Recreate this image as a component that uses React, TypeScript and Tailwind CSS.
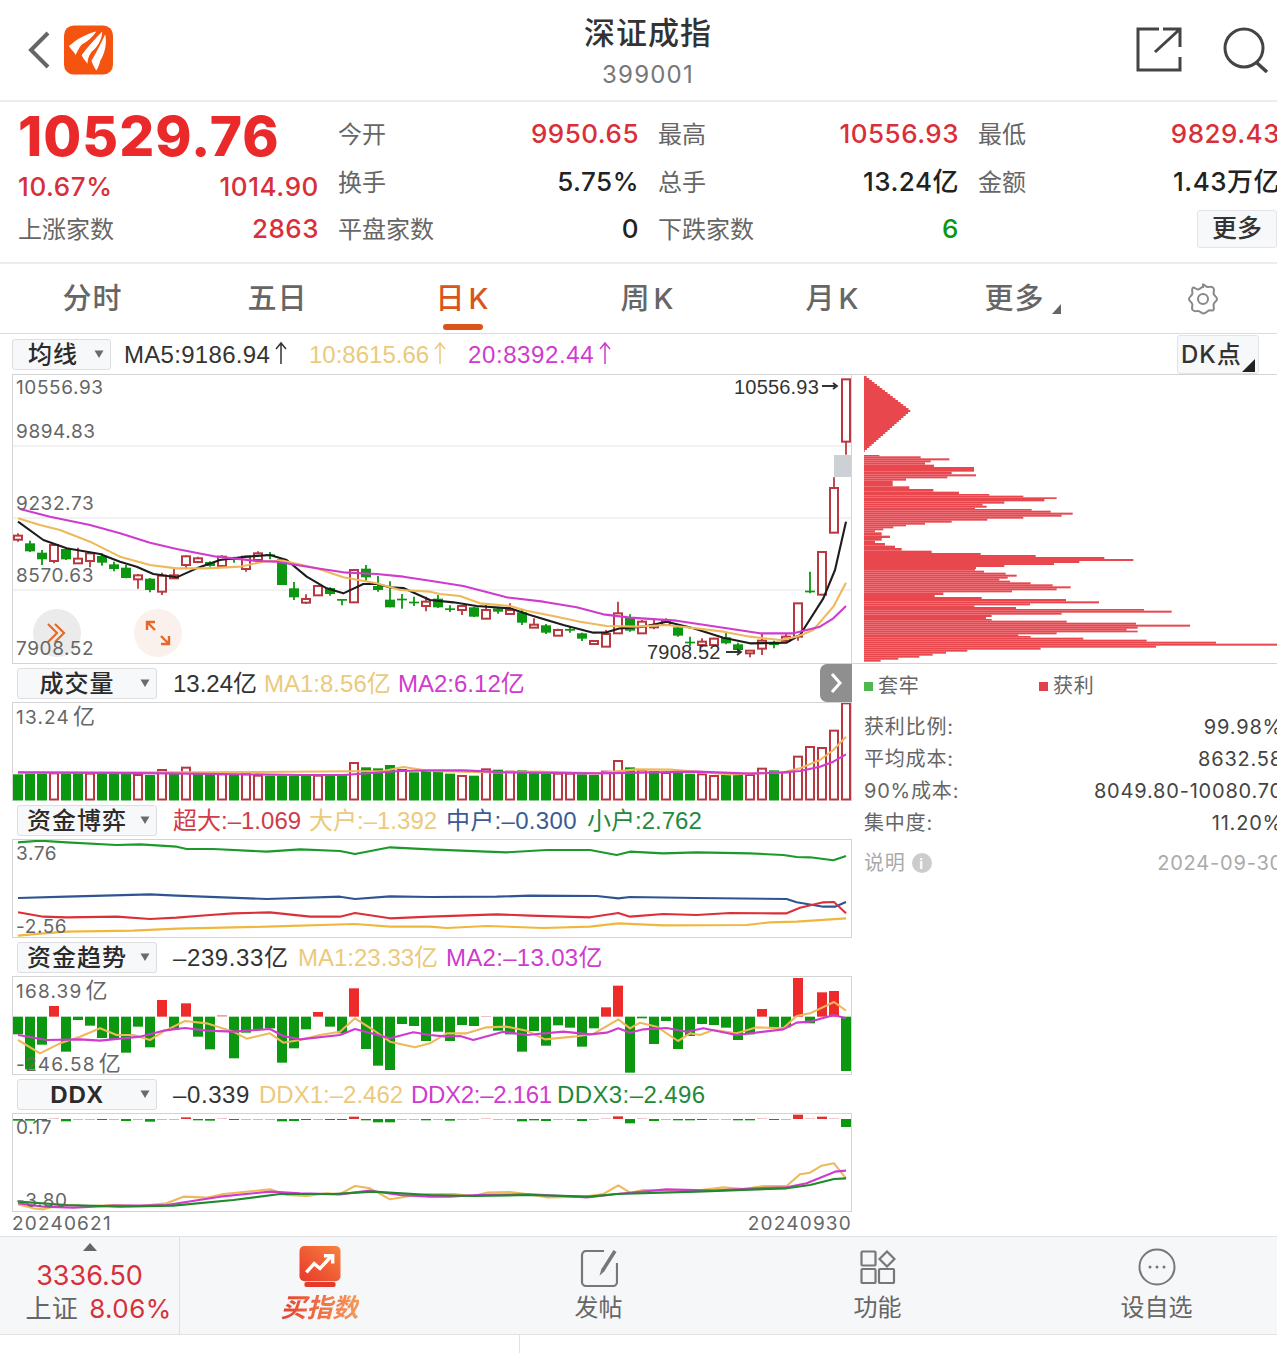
import { ReactNode } from 'react';

type P = [number, number];

const RED = '#b8383f';
const GREEN = '#0b9710';
const ORANGE = '#edb95a';
const MAGENTA = '#cf3bcf';

// x position of candle number i, in px
const cx = (i: number) => 18 + 12 * i;

// points were read off 3x crops, second half of each chart is shifted by 1290
const line = (pts: P[], shifted: P[], oy: number) =>
  [...pts, ...shifted.map(([x, y]) => [x + 1290, y] as P)].map(([x, y]) => `${x / 3},${oy + y / 3}`).join(' ');

// [bodyTop, bodyBottom, wickTop, wickBottom, up]
const CANDLES: [number, number, number, number, number][] = [
  [497, 509, 490, 515, 1], [520, 544, 512, 546, 0], [548, 568, 540, 585, 0], [525, 573, 525, 580, 1], [537, 568, 535, 570, 0],
  [566, 580, 533, 580, 1], [550, 573, 550, 592, 1], [558, 578, 550, 587, 0], [583, 597, 575, 604, 0], [593, 624, 585, 625, 0],
  [616, 628, 612, 656, 1], [626, 660, 624, 667, 0], [617, 665, 608, 675, 1], [616, 625, 597, 625, 1], [559, 585, 556, 598, 1],
  [565, 576, 560, 580, 1], [576, 588, 574, 590, 0], [560, 588, 556, 590, 1], [565, 567, 560, 578, 0], [560, 597, 558, 605, 1],
  [550, 570, 544, 572, 1], [553, 558, 546, 568, 0], [568, 645, 565, 645, 0], [655, 682, 636, 690, 0], [687, 698, 673, 702, 1],
  [648, 676, 645, 678, 1], [654, 672, 652, 677, 0], [687, 690, 687, 706, 0], [600, 697, 597, 699, 1], [596, 622, 585, 632, 0],
  [648, 660, 618, 665, 0], [689, 712, 634, 712, 0], [686, 688, 672, 716, 0], [695, 697, 680, 708, 0], [695, 708, 680, 724, 1],
  [686, 712, 675, 714, 0], [715, 717, 706, 726, 0], [708, 720, 708, 735, 1], [712, 740, 710, 741, 0], [720, 746, 705, 748, 1],
  [715, 725, 712, 731, 0], [720, 732, 700, 733, 1], [727, 758, 720, 765, 0], [764, 773, 745, 773, 1], [766, 788, 762, 792, 0],
  [780, 797, 776, 798, 1], [777, 780, 770, 788, 0], [790, 806, 788, 813, 0], [813, 822, 810, 825, 1], [792, 830, 780, 830, 1],
  [730, 790, 695, 792, 1], [742, 782, 733, 785, 0], [755, 790, 750, 792, 1], [765, 772, 745, 778, 1], [752, 765, 745, 768, 1],
  [772, 797, 762, 800, 0], [815, 818, 800, 828, 0], [815, 825, 805, 832, 1], [806, 825, 803, 830, 1], [802, 820, 785, 823, 0],
  [823, 840, 818, 845, 0], [842, 850, 840, 862, 1], [812, 836, 790, 855, 1], [820, 823, 812, 835, 0], [800, 812, 790, 815, 1],
  [700, 800, 700, 812, 1], [662, 667, 605, 670, 0], [546, 674, 546, 676, 1], [354, 488, 322, 490, 1], [28, 215, 28, 254, 1],
];

// [top, up]
const VOLUME: [number, number][] = [
  [328, 0], [326, 0], [326, 0], [325, 1], [326, 0], [326, 0], [326, 1], [326, 0], [326, 0], [326, 0],
  [330, 1], [330, 0], [315, 1], [326, 0], [308, 1], [326, 0], [326, 0], [328, 1], [328, 0], [328, 1],
  [332, 1], [332, 0], [332, 0], [332, 0], [332, 0], [332, 1], [332, 0], [330, 0], [294, 1], [307, 0],
  [310, 0], [300, 0], [315, 1], [322, 0], [318, 0], [320, 0], [326, 0], [333, 1], [332, 0], [313, 1],
  [314, 0], [320, 1], [316, 0], [322, 0], [326, 0], [326, 1], [326, 1], [328, 0], [330, 0], [320, 1],
  [288, 1], [307, 0], [316, 1], [318, 0], [324, 1], [322, 0], [326, 0], [328, 1], [333, 1], [330, 0],
  [330, 0], [330, 1], [311, 1], [316, 0], [322, 1], [275, 1], [246, 1], [249, 1], [197, 1], [115, 1],
];

// bar end relative to zero line at 230 (3x crop units)
const TREND = [
  283, 388, 314, 198, 335, 240, 257, 294, 298, 338, 260, 322, 180, 270, 190, 290, 328, 225, 355, 278, 268, 265, 368, 325, 268,
  216, 260, 280, 145, 327, 377, 390, 252, 258, 303, 275, 303, 255, 258, 228, 272, 283, 335, 273, 317, 256, 263, 320, 265, 202,
  137, 398, 235, 312, 243, 327, 288, 252, 255, 263, 300, 283, 207, 262, 262, 114, 250, 157, 153, 393,
];

// height, negative goes up (red)
const DDX_BARS = [
  5, 5, 3, -1, 7, 2, 1, 3, 2, 6, 1, 8, 0, 2, -5, 4, 5, -1, 3, 1, 1, 1, 7, 6, 3, 0, 3, 3, -7, 4, 10, 10, 1, 2, 4, 2, 5, 2, 2, -1, 2, 2, 7, 4, 6,
  2, 2, 6, 2, -1, -8, 13, -1, 6, 0, 4, 4, 3, 1, 1, 4, 4, -1, 3, 2, -13, -1, -7, -1, 24,
];

// chip distribution outline [y, right edge] in 3x crop units
const CHIPS: P[] = [
  [258, 58], [262, 182], [268, 268], [274, 212], [280, 195], [287, 222], [294, 342], [300, 342], [308, 275], [316, 348], [322, 262], [328, 138],
  [335, 98], [345, 98], [352, 148], [360, 220], [368, 297], [375, 388], [380, 490], [385, 590], [390, 553], [397, 433], [404, 368], [410, 380],
  [416, 345], [420, 515], [425, 572], [431, 638], [437, 605], [443, 490], [449, 382], [455, 275], [461, 195], [467, 138], [472, 100], [478, 70],
  [484, 45], [490, 65], [500, 90], [507, 65], [515, 45], [522, 75], [530, 105], [537, 125], [545, 215], [552, 362], [558, 527], [564, 733],
  [570, 820], [576, 658], [582, 582], [588, 433], [594, 348], [600, 345], [605, 372], [611, 437], [617, 470], [623, 443], [629, 418], [635, 450],
  [640, 512], [646, 578], [652, 632], [658, 590], [664, 456], [670, 250], [678, 224], [684, 365], [690, 618], [697, 717], [703, 510], [709, 343],
  [714, 468], [720, 852], [725, 935], [731, 605], [737, 395], [744, 378], [750, 395], [755, 620], [761, 828], [767, 990], [773, 833], [779, 800],
  [785, 833], [790, 590], [796, 475], [801, 512], [806, 670], [812, 860], [818, 1068], [824, 1260], [830, 888], [836, 542], [842, 322], [848, 258],
  [854, 218], [860, 178], [866, 115], [872, 62],
];

const Poly = ({ points, color, width = 2.1 }: { points: string; color: string; width?: number }) => (
  <polyline points={points} fill="none" stroke={color} strokeWidth={width} strokeLinejoin="round" />
);

const Caret = () => (
  <svg width="12" height="10" viewBox="0 0 12 10" className="shrink-0">
    <path d="M1.5 1.5h9L6 9z" fill="#6b6b6b" />
  </svg>
);

const UpArrow = ({ color }: { color: string }) => (
  <svg width="14" height="24" viewBox="0 0 14 24" className="mt-[4px] ml-[4px] shrink-0">
    <path d="M7 23V2M2 8l5-6 5 6" fill="none" stroke={color} strokeWidth="1.500" />
  </svg>
);

const Selector = ({ label, small }: { label: ReactNode; small?: boolean }) => (
  <div
    className={`flex h-[31px] items-center rounded-[3px] border border-[#dcdee2] bg-[#f7f8fa] pr-[5px] text-[24px] font-medium tracking-[1px] text-[#2b2b2b] ${small ? 'w-[99px]' : 'w-[140px]'}`}
  >
    <span className={`flex-1 pt-[2px] text-center ${small ? '' : 'pr-[3px]'}`}>{label}</span>
    <Caret />
  </div>
);

const Legend = ({ label, children }: { label: ReactNode; children: ReactNode }) => (
  <div className="flex h-[38px] items-center pl-[5px] font-[family-name:'Liberation_Sans','Noto_Sans_CJK_SC',sans-serif]">
    <Selector label={label} />
    <div className="ml-[16px] flex pt-[2px] text-[24px] whitespace-nowrap">{children}</div>
  </div>
);

const AxisLabel = ({ top, children }: { top: string; children: ReactNode }) => (
  <span className={`absolute left-[3px] text-[19px] leading-[20px] tracking-[0.6px] text-[#666] ${top}`}>{children}</span>
);

const YiLabel = ({ value }: { value: string }) => (
  <>
    <span className="tracking-[1.2px]">{value}</span>
    <span className="ml-[3px] text-[22px]">亿</span>
  </>
);

const Stat = ({ label, value, color }: { label: string; value: string; color: string }) => (
  <div className="flex items-center justify-between">
    <span className="text-[24px] text-[#666]">{label}</span>
    <span className={`pb-[3px] text-[26px] font-medium tracking-[0.5px] whitespace-nowrap ${color}`}>{value}</span>
  </div>
);

const KChart = () => (
  <svg width={838} height={288} viewBox="13 375 838 288" className="block">
    {[446, 518, 590].map((y) => (
      <line key={y} x1={13} x2={851} y1={y} y2={y} stroke="#e4e4e4" />
    ))}
    <rect x={834} y={455} width={17} height={22} fill="#cdd0d4" />
    {CANDLES.map(([t, b, wt, wb, up], i) => {
      const x = cx(i);
      const y = (v: number) => 370 + v / 3;
      return (
        <g key={i}>
          <line x1={x} x2={x} y1={y(wt)} y2={y(wb)} stroke={up ? RED : GREEN} strokeWidth={1.8} />
          {up ? (
            <rect x={x - 4} y={y(t)} width={8} height={(b - t) / 3} fill="#fff" stroke={RED} strokeWidth={2} />
          ) : (
            <rect x={x - 5} y={y(t)} width={10} height={Math.max((b - t) / 3, 1.7)} fill={GREEN} />
          )}
        </g>
      );
    })}
    <Poly
      color="#1d1d1d"
      points={line(
        [[54, 455], [130, 510], [200, 535], [300, 552], [360, 575], [410, 590], [460, 612], [530, 622], [590, 595], [660, 570], [740, 560], [810, 555], [860, 570], [920, 620], [980, 655], [1030, 670], [1090, 642], [1130, 642], [1170, 652], [1210, 654], [1290, 690]],
        [[70, 697], [140, 708], [240, 715], [300, 735], [400, 765], [490, 788], [530, 787], [570, 775], [640, 770], [710, 755], [790, 775], [880, 803], [960, 820], [1070, 818], [1110, 795], [1180, 685], [1215, 600], [1248, 455]],
        370,
      )}
    />
    <Poly
      color={ORANGE}
      points={line(
        [[54, 445], [120, 465], [180, 480], [270, 515], [360, 560], [450, 585], [530, 595], [620, 595], [720, 590], [790, 575], [850, 572], [950, 595], [1030, 622], [1130, 640], [1200, 660], [1290, 665]],
        [[30, 672], [90, 678], [150, 700], [240, 708], [290, 722], [380, 740], [450, 755], [530, 768], [620, 770], [710, 765], [800, 775], [880, 785], [960, 800], [1050, 810], [1100, 800], [1150, 780], [1210, 710], [1248, 638]],
        370,
      )}
    />
    <Poly
      color={MAGENTA}
      points={line(
        [[60, 417], [150, 440], [270, 465], [360, 490], [450, 518], [530, 537], [650, 560], [700, 565], [770, 573], [830, 575], [950, 595], [1030, 607], [1130, 612], [1210, 620], [1290, 632]],
        [[100, 648], [230, 682], [340, 695], [440, 712], [520, 733], [600, 743], [740, 752], [860, 770], [990, 790], [1090, 790], [1170, 770], [1210, 745], [1248, 708]],
        370,
      )}
    />
    <path d="M822 386h15M833 383l4 3-4 3" fill="none" stroke="#333" strokeWidth={1.8} />
    <path d="M726 652h15M737 649l4 3-4 3" fill="none" stroke="#333" strokeWidth={1.8} />
  </svg>
);

const VolumeChart = () => (
  <svg width={838} height={98} viewBox="13 703 838 98" className="block">
    {VOLUME.map(([t, up], i) => {
      const x = cx(i);
      const y = 665 + t / 3;
      return up ? (
        <rect key={i} x={x - 4} y={y} width={8} height={799.5 - y} fill="#fff" stroke={RED} strokeWidth={2} />
      ) : (
        <rect key={i} x={x - 5} y={y} width={10} height={800.5 - y} fill={GREEN} />
      );
    })}
    <Poly
      color={ORANGE}
      points={line(
        [[54, 322], [500, 322], [620, 322], [1150, 318], [1210, 306], [1290, 318]],
        [[200, 322], [320, 320], [500, 325], [620, 313], [720, 314], [900, 328], [1060, 322], [1110, 310], [1170, 285], [1210, 255], [1248, 215]],
        665,
      )}
    />
    <Poly
      color={MAGENTA}
      points={line(
        [[54, 322], [500, 325], [900, 330], [1030, 330], [1200, 318], [1290, 316]],
        [[100, 316], [230, 322], [500, 325], [800, 320], [960, 326], [1060, 322], [1110, 318], [1170, 305], [1210, 290], [1248, 268]],
        665,
      )}
    />
  </svg>
);

const FundChart = () => (
  <svg width={838} height={97} viewBox="13 840 838 97" className="block">
    <Poly
      color="#1a9a2b"
      points={line(
        [[54, 532], [120, 527], [200, 532], [350, 540], [420, 538], [530, 545], [560, 552], [640, 552], [800, 560], [900, 553], [1020, 558], [1065, 567], [1170, 547], [1290, 553]],
        [[170, 560], [230, 562], [350, 555], [480, 555], [560, 570], [600, 560], [700, 565], [800, 562], [960, 565], [1060, 570], [1100, 576], [1140, 577], [1210, 586], [1248, 573]],
        665,
      )}
    />
    <Poly
      color="#2f5590"
      points={line(
        [[54, 699], [200, 695], [450, 688], [530, 692], [800, 702], [1020, 695], [1065, 702], [1170, 694], [1290, 696]],
        [[200, 695], [300, 692], [500, 693], [565, 700], [600, 696], [800, 699], [1070, 702], [1100, 712], [1180, 725], [1215, 725], [1248, 711]],
        665,
      )}
    />
    <Poly
      color="#dc3038"
      points={line(
        [[54, 742], [130, 755], [200, 757], [350, 755], [450, 762], [530, 758], [630, 750], [700, 745], [810, 742], [930, 755], [1020, 755], [1065, 744], [1170, 760], [1290, 755]],
        [[200, 748], [300, 752], [480, 757], [565, 744], [600, 755], [700, 747], [800, 750], [900, 744], [1030, 745], [1070, 745], [1110, 728], [1180, 712], [1212, 711], [1248, 745]],
        665,
      )}
    />
    <Poly
      color="#f0b73e"
      points={line(
        [[54, 812], [130, 805], [200, 800], [400, 797], [530, 791], [800, 785], [1065, 777], [1170, 785], [1290, 785]],
        [[50, 789], [170, 783], [340, 789], [480, 785], [565, 775], [700, 781], [950, 780], [1020, 772], [1100, 770], [1248, 760]],
        665,
      )}
    />
  </svg>
);

const TrendChart = () => (
  <svg width={838} height={97} viewBox="13 977 838 97" className="block">
    {TREND.map((v, i) => {
      const zero = 940 + 230 / 3;
      const end = 940 + v / 3;
      const up = v < 230;
      return (
        <rect
          key={i}
          x={cx(i) - 5}
          y={up ? end : zero}
          width={10}
          height={Math.abs(end - zero)}
          fill={up ? (v > 224 ? '#f0a0a0' : '#ee2a2a') : GREEN}
        />
      );
    })}
    <Poly
      color={ORANGE}
      points={line(
        [[54, 300], [120, 340], [180, 310], [240, 290], [300, 265], [350, 285], [400, 285], [450, 300], [490, 275], [555, 243], [620, 250], [700, 275], [740, 296], [810, 280], [850, 308], [900, 300], [960, 285], [1020, 275], [1065, 235], [1120, 270], [1170, 305], [1245, 322], [1290, 310]],
        [[50, 280], [110, 280], [170, 262], [230, 260], [290, 272], [345, 298], [430, 290], [490, 282], [565, 238], [600, 265], [630, 248], [680, 260], [744, 303], [780, 280], [810, 285], [850, 270], [920, 280], [980, 262], [1060, 265], [1100, 228], [1140, 220], [1212, 186], [1248, 212]],
        940,
      )}
    />
    <Poly
      color={MAGENTA}
      points={line(
        [[54, 285], [140, 300], [240, 298], [300, 302], [420, 290], [490, 272], [555, 264], [620, 272], [700, 275], [810, 267], [850, 288], [900, 298], [1020, 285], [1065, 267], [1170, 295], [1240, 277], [1290, 285]],
        [[50, 290], [90, 288], [130, 300], [220, 275], [290, 285], [400, 275], [480, 283], [530, 278], [565, 265], [600, 278], [640, 268], [710, 264], [770, 275], [820, 265], [920, 285], [1060, 268], [1100, 248], [1140, 245], [1212, 225], [1248, 235]],
        940,
      )}
    />
  </svg>
);

const DdxChart = () => (
  <svg width={838} height={97} viewBox="13 1114 838 97" className="block">
    {DDX_BARS.map((h, i) => {
      const base = 940 + 537 / 3;
      const hh = Math.max(Math.abs(h) / 3, 0.7);
      return (
        <rect
          key={i}
          x={cx(i) - 5}
          y={h < 0 ? base - hh : base}
          width={10}
          height={hh}
          fill={h < 0 ? (h < -3 ? '#e23030' : '#f0b0b0') : h < 3 ? '#7fbf82' : GREEN}
        />
      );
    })}
    <Poly
      color={ORANGE}
      points={line(
        [[54, 793], [100, 805], [130, 808], [180, 795], [270, 798], [340, 795], [420, 798], [500, 790], [550, 770], [620, 773], [670, 762], [810, 748], [860, 765], [920, 768], [980, 760], [1020, 762], [1065, 738], [1110, 745], [1170, 778], [1230, 768], [1290, 762]],
        [[70, 762], [130, 768], [170, 758], [240, 756], [290, 762], [350, 772], [460, 770], [520, 762], [565, 736], [600, 758], [640, 750], [700, 752], [800, 752], [880, 742], [940, 747], [1000, 738], [1070, 738], [1110, 703], [1140, 698], [1175, 677], [1212, 670], [1248, 715]],
        940,
      )}
    />
    <Poly
      color={MAGENTA}
      points={line(
        [[54, 790], [130, 800], [220, 803], [340, 797], [420, 797], [500, 795], [660, 770], [810, 755], [900, 760], [1020, 763], [1110, 752], [1200, 765], [1290, 770]],
        [[60, 770], [140, 765], [300, 763], [400, 768], [470, 772], [560, 762], [710, 748], [850, 752], [980, 745], [1070, 742], [1130, 730], [1215, 695], [1248, 692]],
        940,
      )}
    />
    <Poly
      color="#1f8a2a"
      points={line(
        [[54, 785], [200, 795], [360, 800], [520, 797], [700, 780], [840, 762], [1000, 762], [1120, 755], [1290, 765]],
        [[130, 768], [300, 765], [480, 770], [560, 762], [800, 755], [1070, 745], [1140, 735], [1212, 717], [1248, 715]],
        940,
      )}
    />
  </svg>
);

const ChipChart = () => {
  const top: P[] = [];
  for (let y = 15; y < 248; y += 6) top.push([y, y < 122 ? 12 + ((y - 15) / 107) * 140 : 152 - ((y - 122) / 123) * 140]);
  const draw = (rows: P[]) =>
    rows.map(([y, r], i) => {
      const next = i < rows.length - 1 ? rows[i + 1][0] : y + 6;
      return <rect key={y} x={864} y={370 + y / 3 - 1} width={(r - 12) / 3} height={(next - y) / 3} fill="#e8474e" />;
    });
  return (
    <svg width={425} height={288} viewBox="852 375 425 288" className="block">
      {draw(top)}
      {draw(CHIPS)}
    </svg>
  );
};

const Row = ({ label, value }: { label: string; value: string }) => (
  <div className="flex h-[32px] items-center justify-between">
    <span className="text-[#666]">{label}</span>
    <span className="text-[#444]">{value}</span>
  </div>
);

const NavItem = ({ icon, label }: { icon: ReactNode; label: ReactNode }) => (
  <div className="flex w-[279px] flex-col items-center">
    <div className="flex h-[50px] items-end">{icon}</div>
    <div className="mt-[5px] text-[24px] leading-[32px] text-[#666]">{label}</div>
  </div>
);

export default function App() {
  return (
    <div className="relative h-[1353px] w-[1277px] overflow-hidden bg-white font-[family-name:Inter,'Noto_Sans_CJK_SC',sans-serif]">
      {/* Header */}
      <div className="flex h-[102px] items-center justify-between border-b-2 border-[#ececec]">
        <div className="flex items-center pl-[27px]">
          <svg width="24" height="40" viewBox="0 0 24 40">
            <path d="M21 3L4 20l17 17" fill="none" stroke="#666" strokeWidth="4" />
          </svg>
          <svg width="49" height="50" viewBox="0 0 50 50" className="ml-[13px]">
            <rect width="50" height="50" rx="10" fill="#f55310" />
            <path d="M5 21C14 13 24 8 33 6 29 12 24 16 19 19 16 21 14 26 12 30 10 27 7 24 5 21Z" fill="#fff" />
            <path d="M18 30C24 22 32 13 39 6 39 14 34 22 28 27 25 31 24 35 24 39 22 36 19 33 18 30Z" fill="#fff" />
            <path d="M28 36C33 28 38 18 42 9 44 18 42 28 37 36 36 40 35 43 33 46 31 43 29 39 28 36Z" fill="#fff" />
          </svg>
        </div>
        <div className="absolute top-[10px] left-[448px] flex w-[400px] flex-col items-center">
          <div className="text-[31px] leading-[46px] font-medium tracking-[1px] text-[#333]">深证成指</div>
          <div className="mt-[4px] text-[24px] leading-[30px] tracking-[1.2px] text-[#777]">399001</div>
        </div>
        <div className="flex items-center gap-[41px] pr-[8px]">
          <svg width="46" height="46" viewBox="0 0 46 46">
            <path d="M23 2H2v41h42V30" fill="none" stroke="#444" strokeWidth="3" />
            <path d="M27 2h17v18M44 2L19 25" fill="none" stroke="#444" strokeWidth="3" />
          </svg>
          <svg width="46" height="46" viewBox="0 0 46 46">
            <circle cx="21" cy="21" r="19" fill="none" stroke="#444" strokeWidth="3" />
            <path d="M34 36l10 9" fill="none" stroke="#444" strokeWidth="3.5" />
          </svg>
        </div>
      </div>

      {/* Quote */}
      <div className="grid h-[162px] grid-cols-[301px_301px_301px_302px] grid-rows-[50px_46px_48px] gap-x-[19px] border-b-2 border-[#ececec] pt-[8px] pl-[18px]">
        <div className="text-[55px] leading-[52px] font-extrabold tracking-[1px] text-[#ea2a2a]">10529.76</div>
        <Stat label="今开" value="9950.65" color="text-[#d8303a]" />
        <Stat label="最高" value="10556.93" color="text-[#d8303a]" />
        <Stat label="最低" value="9829.43" color="text-[#d8303a]" />
        <div className="flex items-center justify-between pt-[6px] text-[26px] font-medium tracking-[0.6px] text-[#d8303a]">
          <span>10.67%</span>
          <span>1014.90</span>
        </div>
        <Stat label="换手" value="5.75%" color="text-[#222]" />
        <Stat label="总手" value="13.24亿" color="text-[#222]" />
        <Stat label="金额" value="1.43万亿" color="text-[#222]" />
        <Stat label="上涨家数" value="2863" color="text-[#d8303a]" />
        <Stat label="平盘家数" value="0" color="text-[#222]" />
        <Stat label="下跌家数" value="6" color="text-[#0b9710]" />
        <div className="flex items-start justify-end pt-[4px] pr-[3px]">
          <div className="flex h-[38px] w-[80px] items-center justify-center rounded-[3px] border border-[#e2e4e8] bg-[#f7f8fa] text-[25px] font-medium text-[#333]">
            更多
          </div>
        </div>
      </div>

      {/* Period tabs */}
      <div className="grid h-[70px] w-[1295px] grid-cols-7 items-center border-b border-[#dcdcdc] text-[29px] font-medium tracking-[1px] text-[#666]">
        <div className="text-center">分时</div>
        <div className="text-center">五日</div>
        <div className="relative flex justify-center text-[#d9551a]">
          日<span className="ml-[3px]">K</span>
          <span className="absolute -bottom-[10px] h-[6px] w-[40px] rounded-full bg-[#d9551a]" />
        </div>
        <div className="flex justify-center">
          周<span className="ml-[3px]">K</span>
        </div>
        <div className="flex justify-center">
          月<span className="ml-[3px]">K</span>
        </div>
        <div className="relative flex justify-center pr-[6px]">
          更多
          <svg width="9" height="10" viewBox="0 0 9 10" className="absolute top-[27px] left-[127px]">
            <path d="M9 0v10H0z" fill="#666" />
          </svg>
        </div>
        <div className="flex justify-center">
          <svg width="32" height="32" viewBox="0 0 32 32">
            <path
              d="M16 1.500c2 0 2.500 2.500 5 2.500s4-1 5.500 1.200-.6 3.800.3 6 3.200 2.600 3.200 4.800-2.300 2.600-3.200 4.800.9 3.800-.3 6-3-1-5.500 1.200S18 30.500 16 30.500s-2.500-2.500-5-2.500-4 1-5.500-1.200.6-3.800-.3-6-3.200-2.600-3.200-4.800 2.300-2.600 3.200-4.800-.9-3.800.3-6 3 1.200 5.500 1.200 3-2.500 5-2.500z"
              fill="none"
              stroke="#888"
              strokeWidth="2"
            />
            <circle cx="16" cy="16" r="5" fill="none" stroke="#888" strokeWidth="2" />
          </svg>
        </div>
      </div>

      {/* Charts + chip panel */}
      <div className="flex">
        <div className="w-[852px] shrink-0 pl-[12px]">
          <div className="flex h-[40px] items-center font-[family-name:'Liberation_Sans','Noto_Sans_CJK_SC',sans-serif]">
            <Selector label="均线" small />
            <div className="ml-[13px] flex pt-[2px] text-[24px] whitespace-nowrap">
              <span className="flex w-[185px] tracking-[0.3px] text-[#333]">
                MA5:9186.94
                <UpArrow color="#333" />
              </span>
              <span className="flex w-[159px] text-[#ecc97c]">
                10:8615.66
                <UpArrow color="#ecc97c" />
              </span>
              <span className="flex tracking-[0.6px] text-[#cf3bcf]">
                20:8392.44
                <UpArrow color="#cf3bcf" />
              </span>
            </div>
          </div>
          <div className="relative h-[290px] border border-[#d4d4d4]">
            <KChart />
            <AxisLabel top="top-[3px]">10556.93</AxisLabel>
            <AxisLabel top="top-[47px]">9894.83</AxisLabel>
            <AxisLabel top="top-[119px]">9232.73</AxisLabel>
            <AxisLabel top="top-[191px]">8570.63</AxisLabel>
            <span className="absolute top-[2px] left-[721px] font-[family-name:'Liberation_Sans',sans-serif] text-[20px] leading-[20px] tracking-[0.2px] text-[#333]">
              10556.93
            </span>
            <span className="absolute top-[267px] left-[634px] font-[family-name:'Liberation_Sans',sans-serif] text-[20px] leading-[20px] tracking-[0.2px] text-[#333]">
              7908.52
            </span>
            <div className="absolute top-[234px] left-[20px] flex h-12 w-12 items-center justify-center rounded-full bg-[#ebebeb]">
              <svg width="20" height="20" viewBox="0 0 20 20">
                <path d="M1 1l9 9-9 9M8 1l9 9-9 9" fill="none" stroke="#e5692c" strokeWidth="2.200" />
              </svg>
            </div>
            <div className="absolute top-[234px] left-[121px] flex h-12 w-12 items-center justify-center rounded-full bg-[#fbf1ec]">
              <svg width="26" height="26" viewBox="0 0 26 26">
                <path d="M2 2l8 8M2 10V2h8M24 24l-8-8M24 16v8h-8" fill="none" stroke="#e5692c" strokeWidth="2.400" />
              </svg>
            </div>
            <AxisLabel top="top-[264px]">7908.52</AxisLabel>
          </div>

          <Legend label="成交量">
            <span className="w-[91px] text-[#333]">13.24亿</span>
            <span className="w-[134px] text-[#ecc97c]">MA1:8.56亿</span>
            <span className="text-[#cf3bcf]">MA2:6.12亿</span>
          </Legend>
          <div className="relative h-[99px] border-x border-t border-[#d4d4d4]">
            <VolumeChart />
            <AxisLabel top="top-[3px]">
              <YiLabel value="13.24" />
            </AxisLabel>
          </div>

          <Legend label="资金博弈">
            <span className="w-[136px] text-[#d23b47]">超大:–1.069</span>
            <span className="w-[137px] text-[#ecc97c]">大户:–1.392</span>
            <span className="w-[141px] tracking-[0.3px] text-[#3c5a92]">中户:–0.300</span>
            <span className="text-[#1f8a3a]">小户:2.762</span>
          </Legend>
          <div className="relative h-[99px] border border-[#d4d4d4]">
            <FundChart />
            <AxisLabel top="top-[4px]">3.76</AxisLabel>
            <AxisLabel top="top-[77px]">-2.56</AxisLabel>
          </div>

          <Legend label="资金趋势">
            <span className="w-[125px] tracking-[0.6px] text-[#333]">–239.33亿</span>
            <span className="w-[148px] text-[#ecc97c]">MA1:23.33亿</span>
            <span className="tracking-[0.3px] text-[#cf3bcf]">MA2:–13.03亿</span>
          </Legend>
          <div className="relative h-[99px] border border-[#d4d4d4]">
            <TrendChart />
            <AxisLabel top="top-[3px]">
              <YiLabel value="168.39" />
            </AxisLabel>
            <AxisLabel top="top-[76px]">
              <YiLabel value="-246.58" />
            </AxisLabel>
          </div>

          <Legend label={<span className="font-bold">DDX</span>}>
            <span className="w-[86px] tracking-[0.6px] text-[#333]">–0.339</span>
            <span className="w-[152px] text-[#ecc97c]">DDX1:–2.462</span>
            <span className="w-[146px] tracking-[-0.3px] text-[#cf3bcf]">DDX2:–2.161</span>
            <span className="tracking-[0.4px] text-[#1f8a3a]">DDX3:–2.496</span>
          </Legend>
          <div className="relative h-[99px] border border-[#d4d4d4]">
            <DdxChart />
            <AxisLabel top="top-[4px]">0.17</AxisLabel>
            <AxisLabel top="top-[77px]">-3.80</AxisLabel>
          </div>

          <div className="flex h-[24px] items-center justify-between pt-[1px] text-[19px] tracking-[1.2px] text-[#666]">
            <span>20240621</span>
            <span>20240930</span>
          </div>
        </div>

        <div className="w-[431px] shrink-0">
          <div className="flex h-[40px] justify-end pt-[1px] pr-[24px]">
            <div className="relative flex h-[39px] w-[82px] items-center rounded-[3px] border border-[#e2e4e8] bg-[#f7f8fa] pl-[3px] text-[24px] font-medium tracking-[1px] text-[#333]">
              DK点
              <svg width="13" height="13" viewBox="0 0 13 13" className="absolute right-[3px] bottom-[1px]">
                <path d="M13 0v13H0z" fill="#222" />
              </svg>
            </div>
          </div>
          <div className="h-[290px] border-y border-[#d4d4d4]">
            <ChipChart />
          </div>
          <div className="pl-[12px] text-[20px] tracking-[0.8px]">
            <div className="flex h-[44px] items-center text-[#666]">
              <span className="mr-[5px] h-[9px] w-[9px] bg-[#4db84d]" />
              <span className="w-[161px]">套牢</span>
              <span className="mr-[5px] h-[9px] w-[9px] bg-[#e2404a]" />
              <span>获利</span>
            </div>
            <div className="pt-[3px]">
              <Row label="获利比例:" value="99.98%" />
              <Row label="平均成本:" value="8632.58" />
              <Row label="90%成本:" value="8049.80-10080.70" />
              <Row label="集中度:" value="11.20%" />
            </div>
            <div className="mt-[8px] flex h-[32px] items-center justify-between text-[#aaa]">
              <span className="flex items-center gap-[6px]">
                说明
                <span className="flex h-[20px] w-[20px] items-center justify-center rounded-full bg-[#ccc] text-[14px] font-bold text-white">i</span>
              </span>
              <span>2024-09-30</span>
            </div>
          </div>
        </div>
      </div>

      {/* Bottom bar */}
      <div className="flex h-[99px] w-[1300px] border-y border-[#e2e2e2] bg-[#f6f7f9]">
        <div className="flex w-[180px] flex-col items-center border-r border-[#e0e0e0] pt-[5px]">
          <svg width="16" height="10" viewBox="0 0 16 10">
            <path d="M8 1l7 8H1z" fill="#666" />
          </svg>
          <div className="mt-[5px] text-[27px] leading-[38px] text-[#d8303a]">3336.50</div>
          <div className="ml-[18px] text-[26px] leading-[28px] tracking-[0.4px] whitespace-nowrap text-[#d8303a]">
            <span className="mr-[11px] text-[#666]">上证</span>8.06%
          </div>
        </div>
        <NavItem
          icon={
            <svg width="44" height="41" viewBox="0 0 44 42">
              <defs>
                <linearGradient id="buy" x1="0" y1="1" x2="1" y2="0">
                  <stop offset="0" stopColor="#e8382a" />
                  <stop offset="1" stopColor="#f7833f" />
                </linearGradient>
              </defs>
              <rect x="1" y="0" width="42" height="36" rx="5" fill="url(#buy)" />
              <rect x="6" y="37" width="32" height="5" rx="2" fill="#e8382a" />
              <path d="M8 27l8-9 6 5 11-12M26 10h9v8" fill="none" stroke="#fff" strokeWidth="3.500" />
            </svg>
          }
          label={
            <span className="bg-gradient-to-r from-[#e53a2c] to-[#f59a5a] bg-clip-text text-[26px] font-bold text-transparent italic">买指数</span>
          }
        />
        <NavItem
          icon={
            <svg width="38" height="38" viewBox="0 0 38 38">
              <path d="M24 2H6a4 4 0 0 0-4 4v27a4 4 0 0 0 4 4h27a4 4 0 0 0 4-4V14" fill="none" stroke="#777" strokeWidth="2.200" />
              <path d="M35 2L23 21" fill="none" stroke="#777" strokeWidth="3.500" />
              <path d="M21.500 19.500l3.500 2.200-5.500 5z" fill="#777" />
            </svg>
          }
          label="发帖"
        />
        <NavItem
          icon={
            <svg width="36" height="34" viewBox="0 0 36 34" className="mb-[3px]">
              <g fill="none" stroke="#777" strokeWidth="2.200">
                <rect x="1.500" y="1.500" width="14" height="14" rx="1" />
                <path d="M27 1.500l7.500 7.500-7.500 7.500-7.500-7.500z" />
                <rect x="1.500" y="19" width="14" height="14" rx="1" />
                <rect x="19" y="19" width="15" height="14" rx="1" />
              </g>
            </svg>
          }
          label="功能"
        />
        <NavItem
          icon={
            <svg width="38" height="38" viewBox="0 0 38 38" className="mb-[1px]">
              <circle cx="19" cy="19" r="17.500" fill="none" stroke="#777" strokeWidth="2" />
              <circle cx="12" cy="19" r="1.500" fill="#777" />
              <circle cx="19" cy="19" r="1.500" fill="#777" />
              <circle cx="26" cy="19" r="1.500" fill="#777" />
            </svg>
          }
          label="设自选"
        />
      </div>

      {/* Next screen peeking in */}
      <div className="flex h-[18px]">
        <div className="ml-[519px] w-px bg-[#e2e2e2]" />
      </div>

      {/* Expand button over the charts */}
      <div className="absolute top-[664px] left-[820px] flex h-[38px] w-[32px] items-center justify-center rounded-l-[7px] bg-[#8f8f8f]">
        <svg width="14" height="22" viewBox="0 0 14 22">
          <path d="M3 2l8 9-8 9" fill="none" stroke="#fff" strokeWidth="3" />
        </svg>
      </div>
    </div>
  );
}
